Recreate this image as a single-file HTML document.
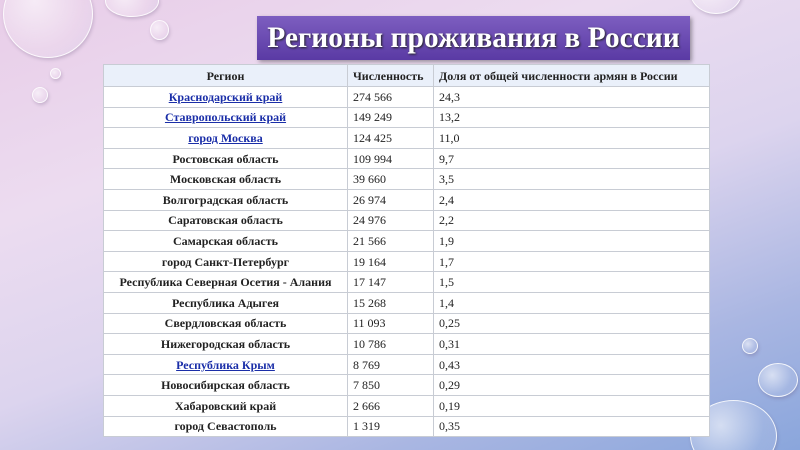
<!DOCTYPE html><html><head><meta charset="utf-8"><style>
html{width:800px;height:450px;overflow:hidden;margin:0}
body{margin:0;width:800px;height:450px;overflow:hidden;position:relative;font-family:"Liberation Serif",serif;
background:linear-gradient(160deg,#e8cde8 0%,#ecdcf0 30%,#dcd4ee 55%,#a9b6e2 80%,#8aa6dc 100%);}
.b{position:absolute;border-radius:50%;border:1.5px solid rgba(255,255,255,.85);background:radial-gradient(circle at 35% 35%,rgba(255,255,255,.6),rgba(255,255,255,.12) 60%,rgba(200,200,230,.25));box-shadow:1px 2px 3px rgba(100,80,120,.25)}
.t{position:absolute;left:257px;top:16px;width:433px;height:44px;background:linear-gradient(#7d5ec0,#5a3aa4);box-shadow:2px 2px 4px rgba(0,0,0,.35);color:#fff;font-weight:bold;font-size:29.5px;line-height:44px;text-align:center;text-shadow:1px 1px 2px #222}
table{position:absolute;left:103px;top:64px;width:607px;border-collapse:collapse;font-size:12px;background:#fff}
td{border:1px solid #c8ccd4;height:19.6px;padding:0 5px;color:#222;line-height:1}
tr td:first-child{text-align:center;font-weight:bold;width:233px}
tr td:nth-child(2){width:75px}
tr:first-child td{background:#eaf0fa;font-weight:bold;height:21px}
a{color:#1a2ea8;text-decoration:underline}
</style></head><body>
<div class="b" style="left:3px;top:-30px;width:88px;height:86px"></div>
<div class="b" style="left:105px;top:-15px;width:52px;height:30px"></div>
<div class="b" style="left:150px;top:20px;width:17px;height:18px"></div>
<div class="b" style="left:50px;top:68px;width:9px;height:9px"></div>
<div class="b" style="left:32px;top:87px;width:14px;height:14px"></div>
<div class="b" style="left:690px;top:-30px;width:50px;height:42px"></div>
<div class="b" style="left:742px;top:338px;width:14px;height:14px"></div>
<div class="b" style="left:758px;top:363px;width:38px;height:32px"></div>
<div class="b" style="left:690px;top:400px;width:85px;height:70px"></div>
<div class="t">Регионы проживания в России</div>
<table>
<tr><td>Регион</td><td>Численность</td><td>Доля от общей численности армян в России</td></tr>
<tr><td><a>Краснодарский край</a></td><td>274 566</td><td>24,3</td></tr>
<tr><td><a>Ставропольский край</a></td><td>149 249</td><td>13,2</td></tr>
<tr><td><a>город Москва</a></td><td>124 425</td><td>11,0</td></tr>
<tr><td>Ростовская область</td><td>109 994</td><td>9,7</td></tr>
<tr><td>Московская область</td><td>39 660</td><td>3,5</td></tr>
<tr><td>Волгоградская область</td><td>26 974</td><td>2,4</td></tr>
<tr><td>Саратовская область</td><td>24 976</td><td>2,2</td></tr>
<tr><td>Самарская область</td><td>21 566</td><td>1,9</td></tr>
<tr><td>город Санкт-Петербург</td><td>19 164</td><td>1,7</td></tr>
<tr><td>Республика Северная Осетия - Алания</td><td>17 147</td><td>1,5</td></tr>
<tr><td>Республика Адыгея</td><td>15 268</td><td>1,4</td></tr>
<tr><td>Свердловская область</td><td>11 093</td><td>0,25</td></tr>
<tr><td>Нижегородская область</td><td>10 786</td><td>0,31</td></tr>
<tr><td><a>Республика Крым</a></td><td>8 769</td><td>0,43</td></tr>
<tr><td>Новосибирская область</td><td>7 850</td><td>0,29</td></tr>
<tr><td>Хабаровский край</td><td>2 666</td><td>0,19</td></tr>
<tr><td>город Севастополь</td><td>1 319</td><td>0,35</td></tr>
</table>
</body></html>
